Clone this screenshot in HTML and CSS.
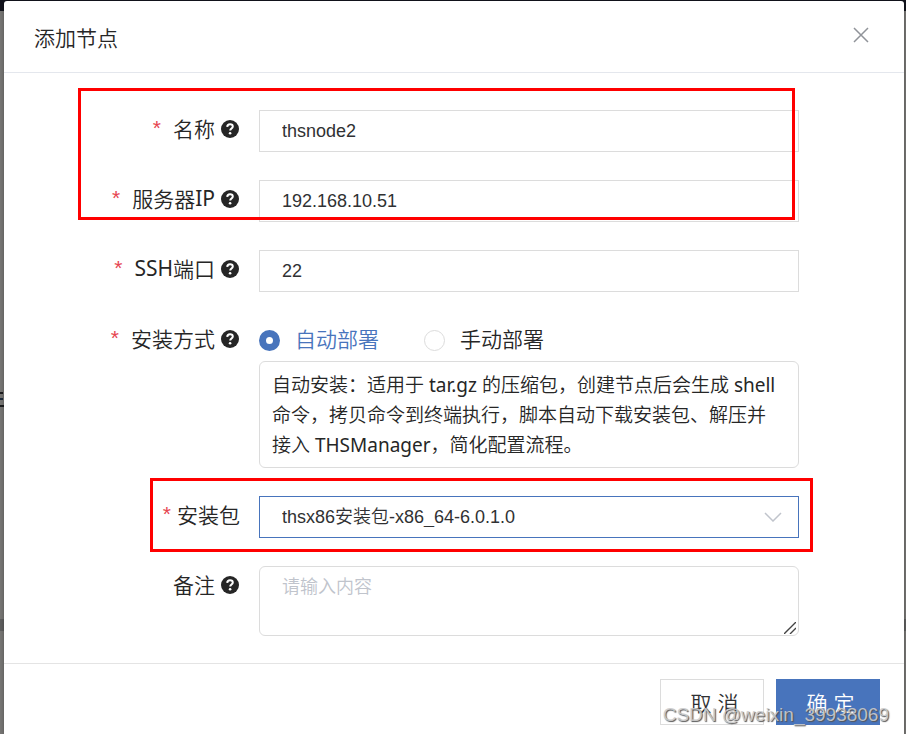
FILE: index.html
```html
<!DOCTYPE html>
<html lang="zh-CN">
<head>
<meta charset="UTF-8" />
<meta name="viewport" content="width=device-width, initial-scale=1" />
<title>添加节点</title>
<link rel="stylesheet" href="styles.css">
</head>
<body>
  <svg width="0" height="0" class="sprite" aria-hidden="true">
    <symbol id="help" viewBox="0 0 18 18">
      <circle cx="9" cy="9" r="9" fill="#262626" />
      <path d="M6.2 6.9C6.3 5.2 7.4 4.3 9 4.3s2.8.9 2.8 2.3c0 1.9-2.6 2-2.6 3.9" fill="none" stroke="#fff" stroke-width="2" />
      <circle cx="9.1" cy="13.2" r="1.3" fill="#fff" />
    </symbol>
  </svg>

  <div class="modal" role="dialog" aria-labelledby="modalTitle">
    <header class="modal-header">
      <h1 id="modalTitle">添加节点</h1>
      <button type="button" class="close-btn" aria-label="关闭">
        <svg width="16" height="16" viewBox="0 0 16 16"><path d="M1 1l14 14M15 1L1 15" fill="none" stroke="#909399" stroke-width="1.5" /></svg>
      </button>
    </header>

    <form class="modal-body" id="nodeForm">
      <div class="group mark mark-basic">
        <div class="row">
          <label for="name"><span class="required">*</span>名称<svg class="help"><use href="#help" /></svg></label>
          <input type="text" class="field" id="name" value="thsnode2" />
        </div>
        <div class="row">
          <label for="serverIp"><span class="required">*</span>服务器<span class="latin">IP</span><svg class="help"><use href="#help" /></svg></label>
          <input type="text" class="field" id="serverIp" value="192.168.10.51" />
        </div>
      </div>

      <div class="row">
        <label for="sshPort"><span class="required">*</span><span class="latin">SSH</span>端口<svg class="help"><use href="#help" /></svg></label>
        <input type="text" class="field" id="sshPort" value="22" />
      </div>

      <div class="row" role="radiogroup" aria-labelledby="modeLabel">
        <div class="label" id="modeLabel"><span class="required">*</span>安装方式<svg class="help"><use href="#help" /></svg></div>
        <div>
          <div class="radios">
            <label class="radio"><input type="radio" name="mode" value="auto" checked /><span>自动部署</span></label>
            <label class="radio"><input type="radio" name="mode" value="manual" /><span>手动部署</span></label>
          </div>
          <p class="tip">自动安装：适用于 <span class="latin">tar.gz</span> 的压缩包，创建节点后会生成 <span class="latin">shell</span> 命令，拷贝命令到终端执行，脚本自动下载安装包、解压并接入 <span class="latin">THSManager</span>，简化配置流程。</p>
        </div>
      </div>

      <div class="row mark mark-package">
        <label for="package"><span class="required near">*</span>安装包</label>
        <div class="select-box">
          <select class="field" id="package">
            <option>thsx86安装包-x86_64-6.0.1.0</option>
          </select>
          <svg class="arrow" width="18" height="10" viewBox="0 0 18 10"><path d="M1 1l8 8 8-8" fill="none" stroke="#c0c4cc" stroke-width="1.5" /></svg>
        </div>
      </div>

      <div class="row">
        <label for="remark">备注<svg class="help"><use href="#help" /></svg></label>
        <div class="remark-box">
          <textarea class="field" id="remark" placeholder="请输入内容"></textarea>
          <svg class="grip" width="12" height="12" viewBox="0 0 12 12"><path d="M0 12L12 0M6 12l6-6" fill="none" stroke="#444" stroke-width="1.4" /></svg>
        </div>
      </div>
    </form>

    <footer class="modal-footer">
      <button type="button" class="btn">取 消</button>
      <button type="submit" form="nodeForm" class="btn primary">确 定</button>
      <span class="watermark">CSDN @weixin_39938069</span>
    </footer>
  </div>
</body>
</html>
```

FILE: styles.css
```css
* {
  box-sizing: border-box;
}
body {
  margin: 0;
  padding: 1px 2px 0 4px;
  min-height: 100vh;
  display: flex;
  background:
    linear-gradient(#1c1c1e, #1c1c1e) 0 392px / 3px 2px no-repeat,
    linear-gradient(#1c2a3a, #1c2a3a) 0 398px / 3px 2px no-repeat,
    linear-gradient(#1c1c1e, #1c1c1e) 0 405px / 4px 2px no-repeat,
    linear-gradient(#13141d 11px, #777674 11px, #777674 619px, #5f5f5f 619px, #5f5f5f 631px, #777674 631px);
  color: #262626;
  font-family: "Noto Sans", "Noto Sans CJK SC", sans-serif;
  font-size: 21px;
  font-weight: 350;
}
.sprite {
  position: absolute;
}
.latin {
  font-weight: 400;
}
.modal {
  flex: 1;
  display: flex;
  flex-direction: column;
  background: #fff;
  border-radius: 3px 3px 0 0;
  box-shadow: 0 1px 4px rgba(0, 0, 0, 0.3);
}
.modal-header {
  display: flex;
  justify-content: space-between;
  align-items: center;
  height: 72px;
  padding: 0 35px 0 30px;
  border-bottom: 1px solid #e4e7ed;
}
h1 {
  margin: 0;
  font-size: 21px;
  font-weight: 350;
}
.close-btn {
  display: flex;
  padding: 0 0 4px;
  border: none;
  background: none;
  cursor: pointer;
}
.modal-body,
.group {
  display: flex;
  flex-direction: column;
  gap: 28px;
}
.modal-body {
  padding: 37px 105px 27px 0;
}
.row {
  display: grid;
  grid-template-columns: 236px 1fr;
  column-gap: 19px;
}
.row > label,
.label {
  display: flex;
  justify-content: flex-end;
  align-items: center;
  height: 36px;
}
.required {
  margin-right: 12px;
  color: #e64550;
  font-family: "Liberation Sans", sans-serif;
}
.required.near {
  margin-right: 6px;
}
.help {
  width: 18px;
  height: 18px;
  margin: 2px 1px 0 6px;
}
.field {
  display: block;
  width: 100%;
  height: 42px;
  padding: 0 22px;
  border: 1px solid #dcdcdc;
  border-radius: 0;
  outline: none;
  background: #fff;
  color: #303133;
  font-family: "Liberation Sans", "Noto Sans CJK SC", sans-serif;
  font-size: 18px;
  font-weight: 350;
}
.radios {
  display: flex;
  gap: 45px;
  height: 41px;
}
.radio {
  display: flex;
  align-items: center;
  gap: 15px;
  height: 36px;
}
.radio input {
  appearance: none;
  width: 21px;
  height: 21px;
  margin: 4px 0 0;
  border: 1px solid #dcdcdc;
  border-radius: 50%;
}
.radio input:checked {
  border: 7px solid #4874bc;
}
.radio input:checked + span {
  color: #4874bc;
}
.tip {
  margin: 0;
  padding: 8px 14px 7px 12px;
  border: 1px solid #dcdcdc;
  border-radius: 6px;
  font-size: 19px;
  line-height: 30px;
}
.select-box,
.remark-box {
  position: relative;
}
select.field {
  appearance: none;
  border-color: #4874bc;
}
.arrow {
  position: absolute;
  right: 17px;
  top: 16px;
  pointer-events: none;
}
textarea.field {
  height: 70px;
  padding: 5px 22px;
  border-radius: 6px;
  resize: vertical;
}
textarea::placeholder {
  color: #c0c4cc;
}
textarea::-webkit-resizer {
  display: none;
}
.grip {
  position: absolute;
  right: 3px;
  bottom: 2px;
  pointer-events: none;
}

/* red frames round the fields to fill in */
.mark {
  position: relative;
}
.mark::after {
  content: "";
  position: absolute;
  border: 3px solid #f00;
  pointer-events: none;
}
.mark-basic::after {
  inset: -22px 4px 2px 74px;
}
.mark-package::after {
  inset: -18px -14px -14px 146px;
}

.modal-footer {
  position: relative;
  display: flex;
  justify-content: flex-end;
  gap: 12px;
  padding: 15px 24px 9px;
  border-top: 1px solid #e4e4e4;
}
.btn {
  width: 104px;
  height: 46px;
  padding: 0 0 0 5px;
  border: 1px solid #dcdcdc;
  background: #fff;
  color: #303133;
  font-family: "Liberation Sans", "Noto Sans CJK SC", sans-serif;
  font-size: 21px;
  font-weight: 350;
  cursor: pointer;
}
.btn.primary {
  border-color: #4874bc;
  background: #4874bc;
  color: #fff;
}
.watermark {
  position: absolute;
  right: 15px;
  bottom: 8px;
  color: rgba(205, 205, 205, 0.9);
  font-family: "Liberation Sans", sans-serif;
  font-size: 19px;
  text-shadow: 1px 1px 1px #555;
  pointer-events: none;
}
```
